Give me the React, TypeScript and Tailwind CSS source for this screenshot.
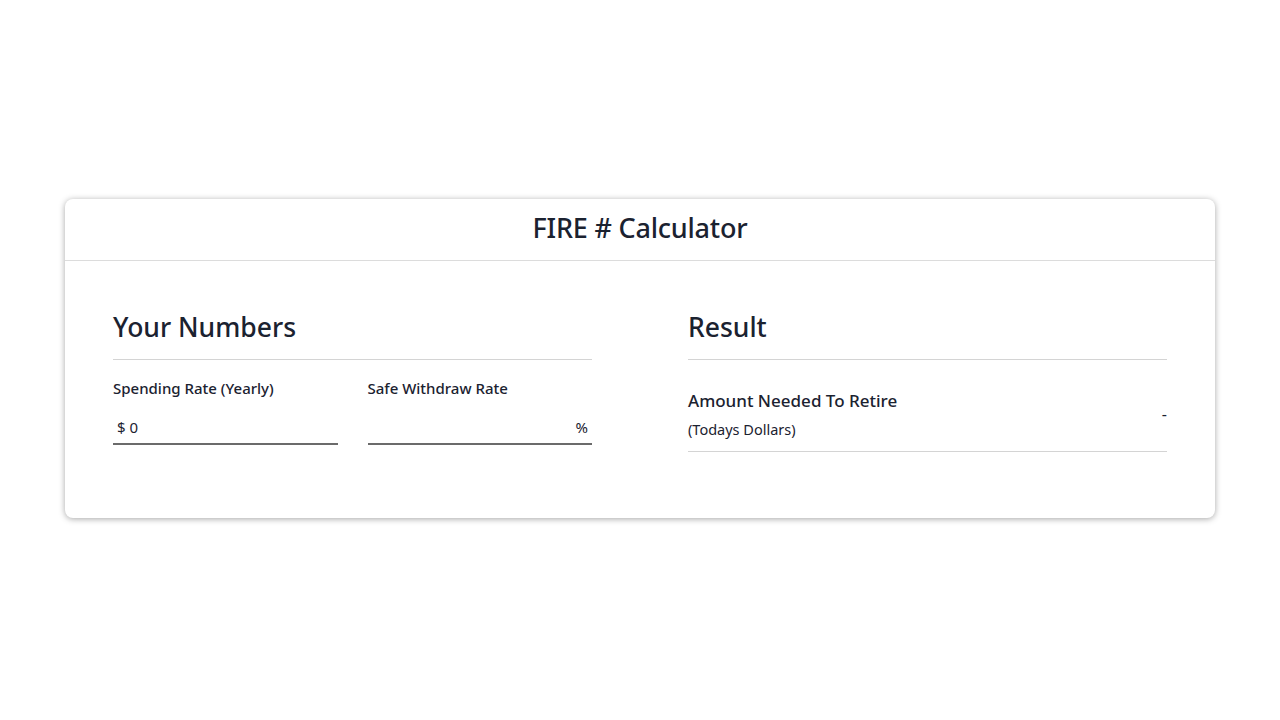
import React from 'react';

const App = () => {
  return (
    <div
      className="min-h-screen bg-white flex items-center justify-center px-[65px] text-[#1b2230]"
      style={{ fontFamily: '"Noto Sans", "Open Sans", sans-serif' }}
    >
      <div className="w-full bg-white rounded-lg shadow-[0_1px_6px_rgba(0,0,0,0.35)] -mt-[3px]">
        <div className="h-[62px] flex items-center justify-center border-b border-[#dcdcdc]">
          <h1 className="text-[27px] font-medium tracking-[-0.2px] -mt-[2px]">FIRE # Calculator</h1>
        </div>

        <div className="grid grid-cols-2 gap-24 px-12 pt-[48px] pb-[66px]">
          <div>
            <h2 className="text-[26.5px] font-medium leading-[36px] pb-[14px] border-b border-[#d4d4d4]">
              Your Numbers
            </h2>
            <div className="grid grid-cols-2 gap-[30px] mt-[18px]">
              <div>
                <label className="block text-[15px] font-medium leading-[20px]">Spending Rate (Yearly)</label>
                <div className="flex items-center mt-[14px] h-[33px] border-b-2 border-[#6b6b6b] px-1 text-[15px]">
                  <span className="mr-1">$</span>
                  <span>0</span>
                </div>
              </div>
              <div>
                <label className="block text-[15px] font-medium leading-[20px]">Safe Withdraw Rate</label>
                <div className="flex items-center justify-end mt-[14px] h-[33px] border-b-2 border-[#6b6b6b] px-1 text-[15px]">
                  <span>%</span>
                </div>
              </div>
            </div>
          </div>

          <div>
            <h2 className="text-[26.5px] font-medium leading-[36px] pb-[14px] border-b border-[#d4d4d4]">
              Result
            </h2>
            <div className="flex items-center justify-between pt-[29px] pb-[12px] border-b border-[#d4d4d4]">
              <div>
                <div className="text-[17px] font-medium leading-[24px]">Amount Needed To Retire</div>
                <div className="text-[14.5px] leading-[20px] mt-[6px]">(Todays Dollars)</div>
              </div>
              <div className="text-[16px]">-</div>
            </div>
          </div>
        </div>
      </div>
    </div>
  );
};

export default App;
